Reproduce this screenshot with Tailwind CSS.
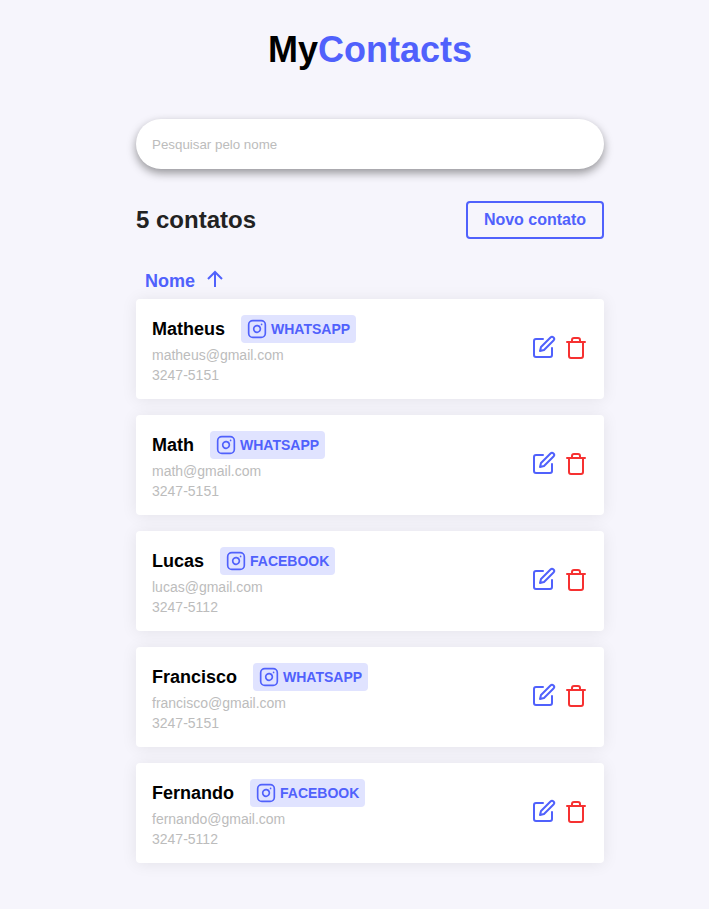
<!DOCTYPE html>
<html lang="pt-BR">
<head>
<meta charset="utf-8">
<title>MyContacts</title>
<script src="https://cdn.jsdelivr.net/npm/@tailwindcss/browser@4"></script>
</head>
<body class="bg-[#f6f5fc] font-['Liberation_Sans',Arial,sans-serif] min-h-screen overflow-hidden">
<svg class="hidden">
  <symbol id="edit" viewBox="0 0 24 24"><path d="M11 4H4a2 2 0 0 0-2 2v14a2 2 0 0 0 2 2h14a2 2 0 0 0 2-2v-7"/><path d="M18.5 2.5a2.121 2.121 0 0 1 3 3L12 15l-4 1 1-4 9.5-9.5z"/></symbol>
  <symbol id="trash" viewBox="0 0 24 24"><path d="M3 6h18M19 6v14a2 2 0 0 1-2 2H7a2 2 0 0 1-2-2V6m3 0V4a2 2 0 0 1 2-2h4a2 2 0 0 1 2 2v2"/></symbol>
  <symbol id="insta" viewBox="0 0 24 24"><rect x="2" y="2" width="20" height="20" rx="5"/><path d="M16 11.37A4 4 0 1 1 12.63 8 4 4 0 0 1 16 11.37zM17.5 6.5h.01"/></symbol>
</svg>
<main class="ml-[136px] w-[468px] pt-[29px]">
  <h1 class="text-center text-4xl leading-[42px] font-bold text-black">My<span class="text-[#5061fc]">Contacts</span></h1>
  <input type="text" placeholder="Pesquisar pelo nome" class="mt-12 block h-[50px] w-full rounded-[25px] bg-white px-4 text-[13.333px] placeholder:text-[#bcbcbc] shadow-[0_4px_10px_rgba(0,0,0,0.4)] outline-none">
  <div class="mt-8 flex h-[38px] items-center justify-between">
    <h2 class="text-2xl font-bold text-[#222]">5 contatos</h2>
    <button class="h-[38px] w-[138px] rounded border-2 border-[#5061fc] text-base leading-none font-bold text-[#5061fc]">Novo contato</button>
  </div>
  <div class="mt-[27px] flex h-[33px] items-start gap-2 pl-[9px] text-[#5061fc]">
    <span class="pt-[5px] text-lg leading-5 font-bold">Nome</span>
    <svg class="mt-[1px] size-6 fill-none stroke-current stroke-2" viewBox="0 0 24 24"><path d="M12 20V5M5 12l7-7 7 7"/></svg>
  </div>
  <div id="list" class="flex flex-col gap-4"></div>
</main>
<script>
const contacts = [
  ['Matheus', 'WHATSAPP', 'matheus@gmail.com', '3247-5151'],
  ['Math', 'WHATSAPP', 'math@gmail.com', '3247-5151'],
  ['Lucas', 'FACEBOOK', 'lucas@gmail.com', '3247-5112'],
  ['Francisco', 'WHATSAPP', 'francisco@gmail.com', '3247-5151'],
  ['Fernando', 'FACEBOOK', 'fernando@gmail.com', '3247-5112'],
];
document.getElementById('list').innerHTML = contacts.map(([name, category, email, phone]) => `
  <article class="flex h-[100px] items-start justify-between rounded bg-white p-4 shadow-[0_1px_16px_rgba(0,0,0,0.08)]">
    <div>
      <div class="flex h-7 items-center gap-4">
        <strong class="text-lg leading-5 text-black">${name}</strong>
        <span class="flex h-7 w-[115px] items-center gap-[2px] rounded bg-[#e0e3ff] pl-1 text-sm font-bold text-[#5061fc]">
          <svg class="size-6 fill-none stroke-current stroke-2 p-[2px]" viewBox="0 0 24 24" stroke-linecap="round" stroke-linejoin="round"><use href="#insta"/></svg>${category}
        </span>
      </div>
      <p class="mt-[2px] text-sm leading-5 text-[#bcbcbc]">${email}</p>
      <p class="text-sm leading-5 text-[#bcbcbc]">${phone}</p>
    </div>
    <div class="mt-5 flex gap-2">
      <svg class="size-6 fill-none stroke-[#5061fc] stroke-2" stroke-linecap="round" stroke-linejoin="round"><use href="#edit"/></svg>
      <svg class="mt-[1px] size-6 fill-none stroke-[#f63131] stroke-2" stroke-linecap="round" stroke-linejoin="round"><use href="#trash"/></svg>
    </div>
  </article>`).join('');
</script>
</body>
</html>
